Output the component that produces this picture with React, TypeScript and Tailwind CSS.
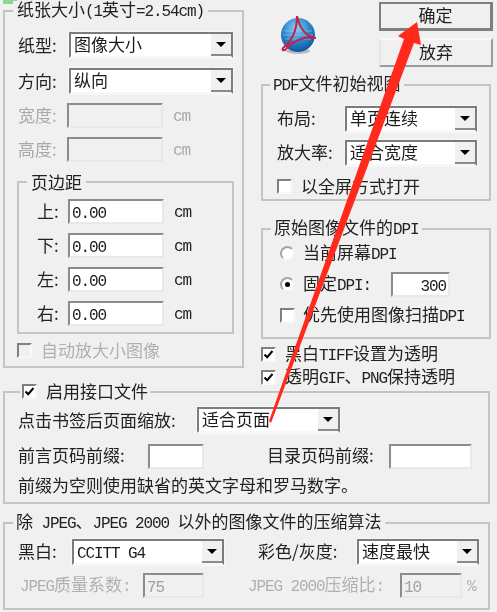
import React from "react";

function T({ s }: { s: string }) {
  const parts = s.split(/([\x20-\x7e]+)/).filter(Boolean);
  return (
    <span className="whitespace-pre">
      {parts.map((p, i) =>
        /^[\x20-\x7e]+$/.test(p) ? (
          <span key={i} className="font-['Liberation_Mono'] text-[16px] tracking-[-1.1px]">{p}</span>
        ) : (
          <span key={i}>{p}</span>
        )
      )}
    </span>
  );
}

function Combo({ text, className }: { text: string; className: string }) {
  return (
    <div className={`h-[26px] flex shrink-0 bg-white border-2 border-[#7c7c7c] border-b-[#f7f7f7] outline outline-1 outline-[#f7f7f7] ${className}`}>
      <div className="flex-1 pl-[3px] leading-[20px] text-[#1c1c1c]"><T s={text} /></div>
      <div className="w-[20px] bg-[#f0f0f0] border-b-2 border-[#8a8a8a] flex items-center justify-center">
        <div className="w-0 h-0 border-x-[5px] border-x-transparent border-t-[5px] border-t-black" />
      </div>
    </div>
  );
}

function Field({ text, className, disabled, right }: { text?: string; className: string; disabled?: boolean; right?: boolean }) {
  return (
    <div
      className={`h-[25px] shrink-0 border-2 border-[#8c8c8c] border-r-[#e8e8e8] border-b-[#e8e8e8] px-[2px] leading-[19px] ${disabled ? "bg-[#f0f0f0] text-[#a0a0a0]" : "bg-white text-[#1c1c1c]"} ${right ? "text-right" : ""} ${className}`}
    >
      {text ? <T s={text} /> : null}
    </div>
  );
}

function Check({ on, disabled }: { on?: boolean; disabled?: boolean }) {
  return (
    <div className={`w-[15px] h-[15px] shrink-0 border-2 border-[#808080] border-r-[#f8f8f8] border-b-[#f8f8f8] flex items-center justify-center ${disabled ? "bg-[#f0f0f0]" : "bg-white"}`}>
      {on ? (
        <svg width="11" height="11" viewBox="0 0 11 11">
          <path d="M1.5 5.5 L4.2 8.2 L9.5 2" fill="none" stroke="#000" strokeWidth="2" />
        </svg>
      ) : null}
    </div>
  );
}

function Radio({ on }: { on?: boolean }) {
  return (
    <div className="w-[15px] h-[15px] shrink-0 rounded-full bg-white border-2 border-[#a4a4a4] border-r-[#f4f4f4] border-b-[#f4f4f4] flex items-center justify-center">
      {on ? <div className="w-[5px] h-[5px] rounded-full bg-black" /> : null}
    </div>
  );
}

function Group({ className, legend, legendClass, children }: { className: string; legend: React.ReactNode; legendClass: string; children: React.ReactNode }) {
  return (
    <div className={`relative border-2 border-[#c4c4c4] ${className}`}>
      <div className={`absolute top-[-11px] h-[18px] bg-[#f0f0f0] flex items-center whitespace-nowrap text-[#222] ${legendClass}`}>{legend}</div>
      {children}
    </div>
  );
}

function Btn({ text, main }: { text: string; main?: boolean }) {
  return (
    <div className={`w-[114px] h-[29px] pb-[3px] flex items-center justify-center text-[#222] bg-[#f0f0f0] border-[#7f7f7f] ${main ? "border-[3px] border-t-2 border-l-2" : "border-2 border-t-[#f8f8f8] border-l-[#e4e4e4] border-b-[#9a9a9a] border-r-[#9a9a9a]"}`}>
      {text}
    </div>
  );
}

function Logo() {
  return (
    <svg width="38" height="40" viewBox="0 0 38 40">
      <defs>
        <radialGradient id="ball" cx="0.45" cy="0.3" r="0.75">
          <stop offset="0" stopColor="#8fd0f2" />
          <stop offset="0.5" stopColor="#2c8ad0" />
          <stop offset="1" stopColor="#0d4f92" />
        </radialGradient>
      </defs>
      <ellipse cx="19" cy="36" rx="12" ry="3" fill="#bcbcbc" />
      <circle cx="19" cy="20" r="17" fill="url(#ball)" />
      <path d="M5 16h28M4 20h30M6 24h26" stroke="#9cc8e6" strokeWidth="1" opacity="0.6" />
      <path d="M18 1 C18 14 13 26 4 33 C2 36 6 36 8 33 C13 27 24 21 37 23 C28 22 21 14 18 1" fill="none" stroke="#c2224c" strokeWidth="2" />
    </svg>
  );
}

const row = "flex items-center";
const lab = "-mt-[2px]";

export default function App() {
  return (
    <div className="relative w-[497px] h-[612px] overflow-hidden bg-[#f0f0f0] text-[17px] leading-none font-['Noto_Sans_CJK_SC',sans-serif] text-[#222]">
      <div className="absolute left-[3px] top-0 w-[14px] h-[4px] bg-[#8fd694]" />
      <div className="flex flex-col blur-[0.35px]">
        <div className="flex h-[385px] pl-[3px] pt-[2px]">
          {/* left column */}
          <div className="w-[241px] mt-[8px] mr-[17px]">
            <Group className="h-[358px] pl-[13px] pr-[9px] pt-[20px]" legend={<T s="纸张大小(1英寸=2.54cm)" />} legendClass="left-[8px] px-[4px]">
              <div className={`${row} h-[26px]`}>
                <span className={`w-[51px] ${lab}`}>纸型:</span>
                <Combo text="图像大小" className="w-[164px]" />
              </div>
              <div className={`${row} h-[26px] mt-[10px]`}>
                <span className={`w-[51px] ${lab}`}>方向:</span>
                <Combo text="纵向" className="w-[164px]" />
              </div>
              <div className={`${row} h-[25px] mt-[9px] text-[#a8a8a8]`}>
                <span className={`w-[49px] ${lab}`}>宽度:</span>
                <Field disabled className="w-[96px]" />
                <span className={`ml-[10px] ${lab}`}><T s="cm" /></span>
              </div>
              <div className={`${row} h-[25px] mt-[9px] text-[#a8a8a8]`}>
                <span className={`w-[49px] ${lab}`}>高度:</span>
                <Field disabled className="w-[96px]" />
                <span className={`ml-[10px] ${lab}`}><T s="cm" /></span>
              </div>
              <Group className="h-[153px] w-[217px] mt-[19px] -ml-[1px] pl-[18px] pt-[16px] flex flex-col gap-[9px]" legend="页边距" legendClass="left-[8px] px-[4px]">
                {["上", "下", "左", "右"].map((l) => (
                  <div key={l} className={`${row} h-[25px]`}>
                    <span className={`w-[31px] ${lab}`}>{l}:</span>
                    <Field text="0.00" className="w-[96px]" />
                    <span className={`ml-[10px] ${lab}`}><T s="cm" /></span>
                  </div>
                ))}
              </Group>
              <div className={`${row} h-[15px] mt-[9px] gap-[9px] text-[#b0b0b0] -ml-[1px]`}>
                <Check disabled />
                <span className={lab}>自动放大小图像</span>
              </div>
            </Group>
          </div>
          {/* right column */}
          <div className="w-[232px]">
            <div className="flex h-[82px]">
              <div className="w-[118px] pl-[18px] pt-[13px]"><Logo /></div>
              <div className="flex flex-col gap-[7px]">
                <Btn text="确定" main />
                <Btn text="放弃" />
              </div>
            </div>
            <Group className="w-[230px] h-[117px] pl-[14px] pt-[20px]" legend={<T s="PDF文件初始视图" />} legendClass="left-[7px] px-[3px]">
              <div className={`${row} h-[26px]`}>
                <span className={`w-[68px] -mt-[4px]`}>布局:</span>
                <Combo text="单页连续" className="w-[132px]" />
              </div>
              <div className={`${row} h-[26px] mt-[8px]`}>
                <span className={`w-[68px] -mt-[4px]`}>放大率:</span>
                <Combo text="适合宽度" className="w-[132px]" />
              </div>
              <div className={`${row} h-[16px] mt-[12px] gap-[9px]`}>
                <Check />
                <span className={lab}>以全屏方式打开</span>
              </div>
            </Group>
            <Group className="w-[230px] h-[111px] mt-[27px] pl-[17px] pt-[16px]" legend={<T s="原始图像文件的DPI" />} legendClass="left-[8px] px-[3px]">
              <div className={`${row} h-[15px] gap-[8px]`}>
                <Radio />
                <span className={lab}><T s="当前屏幕DPI" /></span>
              </div>
              <div className={`${row} gap-[8px] mt-[11px] h-[25px]`}>
                <Radio on />
                <span className={`w-[80px] ${lab}`}><T s="固定DPI:" /></span>
                <Field text="300" right className="w-[59px]" />
              </div>
              <div className={`${row} h-[15px] gap-[8px] mt-[11px]`}>
                <Check />
                <span className={lab}><T s="优先使用图像扫描DPI" /></span>
              </div>
            </Group>
            <div className={`${row} h-[15px] gap-[9px] mt-[8px]`}>
              <Check on />
              <span className={lab}><T s="黑白TIFF设置为透明" /></span>
            </div>
            <div className={`${row} h-[15px] gap-[9px] mt-[8px]`}>
              <Check on />
              <span className={lab}><T s="透明GIF、PNG保持透明" /></span>
            </div>
          </div>
        </div>
        {/* interface group */}
        <div className="pl-[3px] pt-[6px]">
          <Group
            className="w-[487px] h-[113px] pl-[13px] pt-[14px]"
            legend={
              <span className={`${row} gap-[9px]`}>
                <Check on />
                <span className={lab}>启用接口文件</span>
              </span>
            }
            legendClass="left-[15px] px-[2px]"
          >
            <div className={`${row} h-[26px]`}>
              <span className={`w-[179px] ${lab}`}>点击书签后页面缩放:</span>
              <Combo text="适合页面" className="w-[143px]" />
            </div>
            <div className={`${row} h-[25px] mt-[11px]`}>
              <span className={`w-[130px] -mt-[4px]`}>前言页码前缀:</span>
              <Field className="w-[56px]" />
              <span className={`ml-[63px] w-[122px] -mt-[4px]`}>目录页码前缀:</span>
              <Field className="w-[83px]" />
            </div>
            <div className="mt-[7px]">前缀为空则使用缺省的英文字母和罗马数字。</div>
          </Group>
          <Group
            className="w-[487px] h-[88px] mt-[18px] pl-[13px] pt-[15px]"
            legend={<T s="除 JPEG、JPEG 2000 以外的图像文件的压缩算法" />}
            legendClass="left-[8px] px-[3px]"
          >
            <div className={`${row} h-[26px]`}>
              <span className={`w-[54px] -mt-[4px]`}>黑白:</span>
              <Combo text="CCITT G4" className="w-[152px]" />
              <span className={`ml-[34px] w-[99px] -mt-[4px]`}>彩色/灰度:</span>
              <Combo text="速度最快" className="w-[122px]" />
            </div>
            <div className={`${row} h-[25px] mt-[8px] text-[#b0b0b0]`}>
              <span className={`w-[125px] pl-[2px] ${lab}`}><T s="JPEG质量系数:" /></span>
              <Field disabled text="75" className="w-[61px]" />
              <span className={`ml-[44px] w-[152px] ${lab}`}><T s="JPEG 2000压缩比:" /></span>
              <Field disabled text="10" className="w-[62px]" />
              <span className={`ml-[5px] ${lab}`}><T s="%" /></span>
            </div>
          </Group>
        </div>
      </div>
      <svg className="absolute inset-0" width="497" height="612" viewBox="0 0 497 612">
        <polygon points="417,22 398,36 404,39 269,421 271,423 414,43 421,45" fill="#ff2a1c" />
      </svg>
    </div>
  );
}
